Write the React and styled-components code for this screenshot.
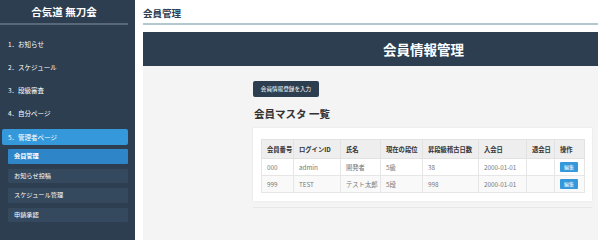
import React from 'react'
import styled, { createGlobalStyle } from 'styled-components'

const GlobalStyle = createGlobalStyle`
  html, body {
    margin: 0;
    padding: 0;
    overflow: hidden;
    background: #f4f4f4;
    font-family: 'Noto Sans CJK JP', 'Noto Sans', sans-serif;
  }
`

const Layout = styled.div`
  display: flex;
  width: 598px;
  height: 100vh;
  min-height: 224px;
  overflow: hidden;
`

const Sidebar = styled.aside`
  flex: 0 0 135px;
  background: #2c3e50;
  padding-right: 7px;
  box-sizing: border-box;
`

const Brand = styled.div`
  height: 23px;
  line-height: 23px;
  text-align: center;
  color: #ffffff;
  font-size: 10.5px;
  font-weight: 700;
  border-bottom: 2px solid #596878;
`

const Menu = styled.ul`
  list-style: none;
  margin: 8px 0 0;
  padding: 0;
`

const MenuItem = styled.li`
  height: ${(p) => (p.$active ? '16px' : '23px')};
  line-height: ${(p) => (p.$active ? '16px' : '23px')};
  margin: ${(p) => (p.$active ? '4px 0 4px 2px' : '0')};
  padding-left: ${(p) => (p.$active ? '6px' : '8px')};
  background: ${(p) => (p.$active ? '#3498db' : 'transparent')};
  color: #ffffff;
  font-size: 6.5px;
  border-radius: 2px;
`

const SubMenu = styled.ul`
  list-style: none;
  margin: 1px 0 0 8px;
  padding: 0;
  display: flex;
  flex-direction: column;
  gap: 5px;
`

const SubItem = styled.li`
  height: 14.5px;
  line-height: 14.5px;
  padding-left: 6px;
  background: ${(p) => (p.$active ? '#2e86c8' : '#34495e')};
  color: #ffffff;
  font-size: 6.2px;
  font-weight: ${(p) => (p.$active ? 700 : 400)};
  border-radius: 1px;
`

const Main = styled.main`
  flex: 1;
  display: flex;
  flex-direction: column;
  background: #ffffff;
  padding-left: 8px;
`

const PageTitle = styled.h2`
  margin: 0;
  height: 23px;
  line-height: 26px;
  font-size: 9.5px;
  font-weight: 700;
  color: #2c3e50;
  border-bottom: 2px solid #b3c8cf;
`

const Banner = styled.div`
  margin-top: 7px;
  height: 34px;
  line-height: 34px;
  padding-left: 106px;
  background: #2c3e50;
  color: #ffffff;
  text-align: center;
  font-size: 13.5px;
  font-weight: 700;
`

const Content = styled.section`
  flex: 1;
  background: #f4f4f4;
  padding: 15px 0 0 110px;
`

const Inner = styled.div`
  width: 339px;
`

const DarkButton = styled.button`
  display: block;
  width: 66px;
  height: 16px;
  padding: 0;
  border: none;
  border-radius: 2px;
  background: #2c3e50;
  color: #ffffff;
  font-family: inherit;
  font-size: 5.6px;
`

const SectionTitle = styled.h3`
  margin: 9px 0 0 1px;
  font-size: 10.5px;
  font-weight: 700;
  color: #333333;
  line-height: 16px;
`

const Card = styled.div`
  margin-top: 6px;
  background: #ffffff;
  padding: 11px 8px 8px;
  box-shadow: 0 0 2px rgba(0, 0, 0, 0.08);
`

const Table = styled.table`
  width: 100%;
  border-collapse: collapse;
  table-layout: fixed;
  font-size: 6.3px;
`

const Th = styled.th`
  height: 18px;
  padding: 0 0 0 5px;
  text-align: left;
  font-weight: 700;
  color: #333333;
  background: #eeeeee;
  border: 1px solid #e2e2e2;
`

const Row = styled.tr`
  background: ${(p) => (p.$striped ? '#f9f9f9' : '#ffffff')};
`

const Td = styled.td`
  height: 16px;
  padding: 0 0 0 5px;
  color: #777777;
  border: 1px solid #e6e6e6;
`

const EditButton = styled.span`
  display: inline-block;
  width: 18px;
  height: 10px;
  line-height: 10px;
  text-align: center;
  background: #3498db;
  color: #ffffff;
  font-size: 5px;
  border-radius: 1px;
`

const Divider = styled.div`
  margin-top: 6px;
  border-top: 1px solid #e8e8e8;
`

const menu = ['1．お知らせ', '2．スケジュール', '3．段級審査', '4．自分ページ']
const subMenu = ['会員管理', 'お知らせ投稿', 'スケジュール管理', '申請承認']
const columns = [
  ['会員番号', 32],
  ['ログインID', 47],
  ['氏名', 40],
  ['現在の段位', 42],
  ['昇段級稽古日数', 56],
  ['入会日', 48],
  ['退会日', 28],
  ['操作', 30],
]
const members = [
  { no: '000', login: 'admin', name: '開発者', rank: '5級', days: '38', joined: '2000-01-01', left: '' },
  { no: '999', login: 'TEST', name: 'テスト太郎', rank: '5段', days: '998', joined: '2000-01-01', left: '' },
]

const App = () => {
  return (
    <Layout>
      <GlobalStyle />
      <Sidebar>
        <Brand>合気道 無刀会</Brand>
        <Menu>
          {menu.map((item) => (
            <MenuItem key={item}>{item}</MenuItem>
          ))}
          <MenuItem $active>5．管理者ページ</MenuItem>
        </Menu>
        <SubMenu>
          {subMenu.map((item, i) => (
            <SubItem key={item} $active={i === 0}>
              {item}
            </SubItem>
          ))}
        </SubMenu>
      </Sidebar>
      <Main>
        <PageTitle>会員管理</PageTitle>
        <Banner>会員情報管理</Banner>
        <Content>
          <Inner>
            <DarkButton>会員情報登録を入力</DarkButton>
            <SectionTitle>会員マスタ 一覧</SectionTitle>
            <Card>
              <Table>
                <colgroup>
                  {columns.map(([label, w]) => (
                    <col key={label} style={{ width: w }} />
                  ))}
                </colgroup>
                <thead>
                  <tr>
                    {columns.map(([label]) => (
                      <Th key={label}>{label}</Th>
                    ))}
                  </tr>
                </thead>
                <tbody>
                  {members.map((m, i) => (
                    <Row key={m.no} $striped={i % 2 === 1}>
                      <Td>{m.no}</Td>
                      <Td>{m.login}</Td>
                      <Td>{m.name}</Td>
                      <Td>{m.rank}</Td>
                      <Td>{m.days}</Td>
                      <Td>{m.joined}</Td>
                      <Td>{m.left}</Td>
                      <Td>
                        <EditButton>編集</EditButton>
                      </Td>
                    </Row>
                  ))}
                </tbody>
              </Table>
            </Card>
            <Divider />
          </Inner>
        </Content>
      </Main>
    </Layout>
  )
}

export default App
